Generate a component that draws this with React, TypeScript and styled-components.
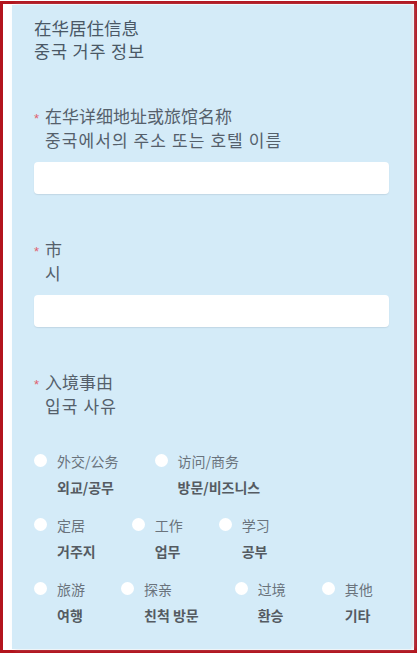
import styled, { createGlobalStyle } from 'styled-components';

const GlobalStyle = createGlobalStyle`
  body {
    margin: 0;
    background: #ffffff;
    font-family: "Noto Sans CJK SC", "Noto Sans CJK KR", "Noto Sans", sans-serif;
  }
`;

const Frame = styled.div`
  box-sizing: border-box;
  width: 417px;
  height: 652px;
  margin-top: 1px;
  border: 3px solid #b3141d;
  padding: 1px 3px 1px 9px;
  background: #ffffff;
`;

const Panel = styled.section`
  box-sizing: border-box;
  height: 100%;
  background: #d4ebf8;
  padding: 11px 22px 0 22px;
  box-shadow: 3px 0 4px rgba(180, 200, 215, 0.5);
`;

const Heading = styled.div`
  font-size: 17.5px;
  line-height: 23px;
  color: #4a5866;
  margin-bottom: 42px;
`;

const Field = styled.div`
  margin-bottom: 43px;
`;

const Label = styled.div`
  display: flex;
  font-size: 17px;
  line-height: 24px;
  color: #55606b;
`;

const Star = styled.span`
  width: 11px;
  flex-shrink: 0;
  color: #e0626f;
  font-family: "Liberation Sans", sans-serif;
  font-size: 13px;
  line-height: 30px;
`;

const Ko = styled.span<{ $spacing?: number }>`
  display: block;
  font-family: "Noto Sans CJK KR", "Noto Sans", sans-serif;
  letter-spacing: ${(p) => p.$spacing ?? 1.1}px;
`;

const Input = styled.input`
  display: block;
  box-sizing: border-box;
  width: 100%;
  height: 32px;
  margin-top: 10px;
  border: none;
  border-radius: 4px;
  background: #ffffff;
  box-shadow: 0 1px 1px rgba(160, 180, 195, 0.35);
  outline: none;
`;

const Options = styled.div`
  margin-top: 30px;
  display: flex;
  flex-direction: column;
  gap: 12px;
`;

const OptionRow = styled.div`
  display: flex;
  gap: 36px;
`;

const Option = styled.label`
  display: flex;
  gap: 10px;
`;

const Dot = styled.span`
  width: 13px;
  height: 13px;
  margin-top: 6px;
  border-radius: 50%;
  background: #ffffff;
  flex-shrink: 0;
`;

const OptText = styled.span`
  display: flex;
  flex-direction: column;
  font-size: 14px;
  line-height: 26px;
`;

const Zh = styled.span`
  color: #6a737c;
`;

const KoOpt = styled.span`
  font-family: "Noto Sans CJK KR", "Noto Sans", sans-serif;
  font-weight: 700;
  color: #555b62;
`;

const rows: [string, string][][] = [
  [
    ['外交/公务', '외교/공무'],
    ['访问/商务', '방문/비즈니스'],
  ],
  [
    ['定居', '거주지'],
    ['工作', '업무'],
    ['学习', '공부'],
  ],
  [
    ['旅游', '여행'],
    ['探亲', '친척 방문'],
    ['过境', '환승'],
    ['其他', '기타'],
  ],
];

export default function App() {
  return (
    <>
      <GlobalStyle />
      <Frame>
        <Panel>
          <Heading>
            在华居住信息
            <Ko $spacing={0.8}>중국 거주 정보</Ko>
          </Heading>

          <Field>
            <Label>
              <Star>*</Star>
              <div>
                在华详细地址或旅馆名称
                <Ko>중국에서의 주소 또는 호텔 이름</Ko>
              </div>
            </Label>
            <Input />
          </Field>

          <Field>
            <Label>
              <Star>*</Star>
              <div>
                市
                <Ko>시</Ko>
              </div>
            </Label>
            <Input />
          </Field>

          <Label>
            <Star>*</Star>
            <div>
              入境事由
              <Ko>입국 사유</Ko>
            </div>
          </Label>

          <Options>
            {rows.map((row, i) => (
              <OptionRow key={i}>
                {row.map(([zh, ko]) => (
                  <Option key={zh}>
                    <Dot />
                    <OptText>
                      <Zh>{zh}</Zh>
                      <KoOpt>{ko}</KoOpt>
                    </OptText>
                  </Option>
                ))}
              </OptionRow>
            ))}
          </Options>
        </Panel>
      </Frame>
    </>
  );
}
